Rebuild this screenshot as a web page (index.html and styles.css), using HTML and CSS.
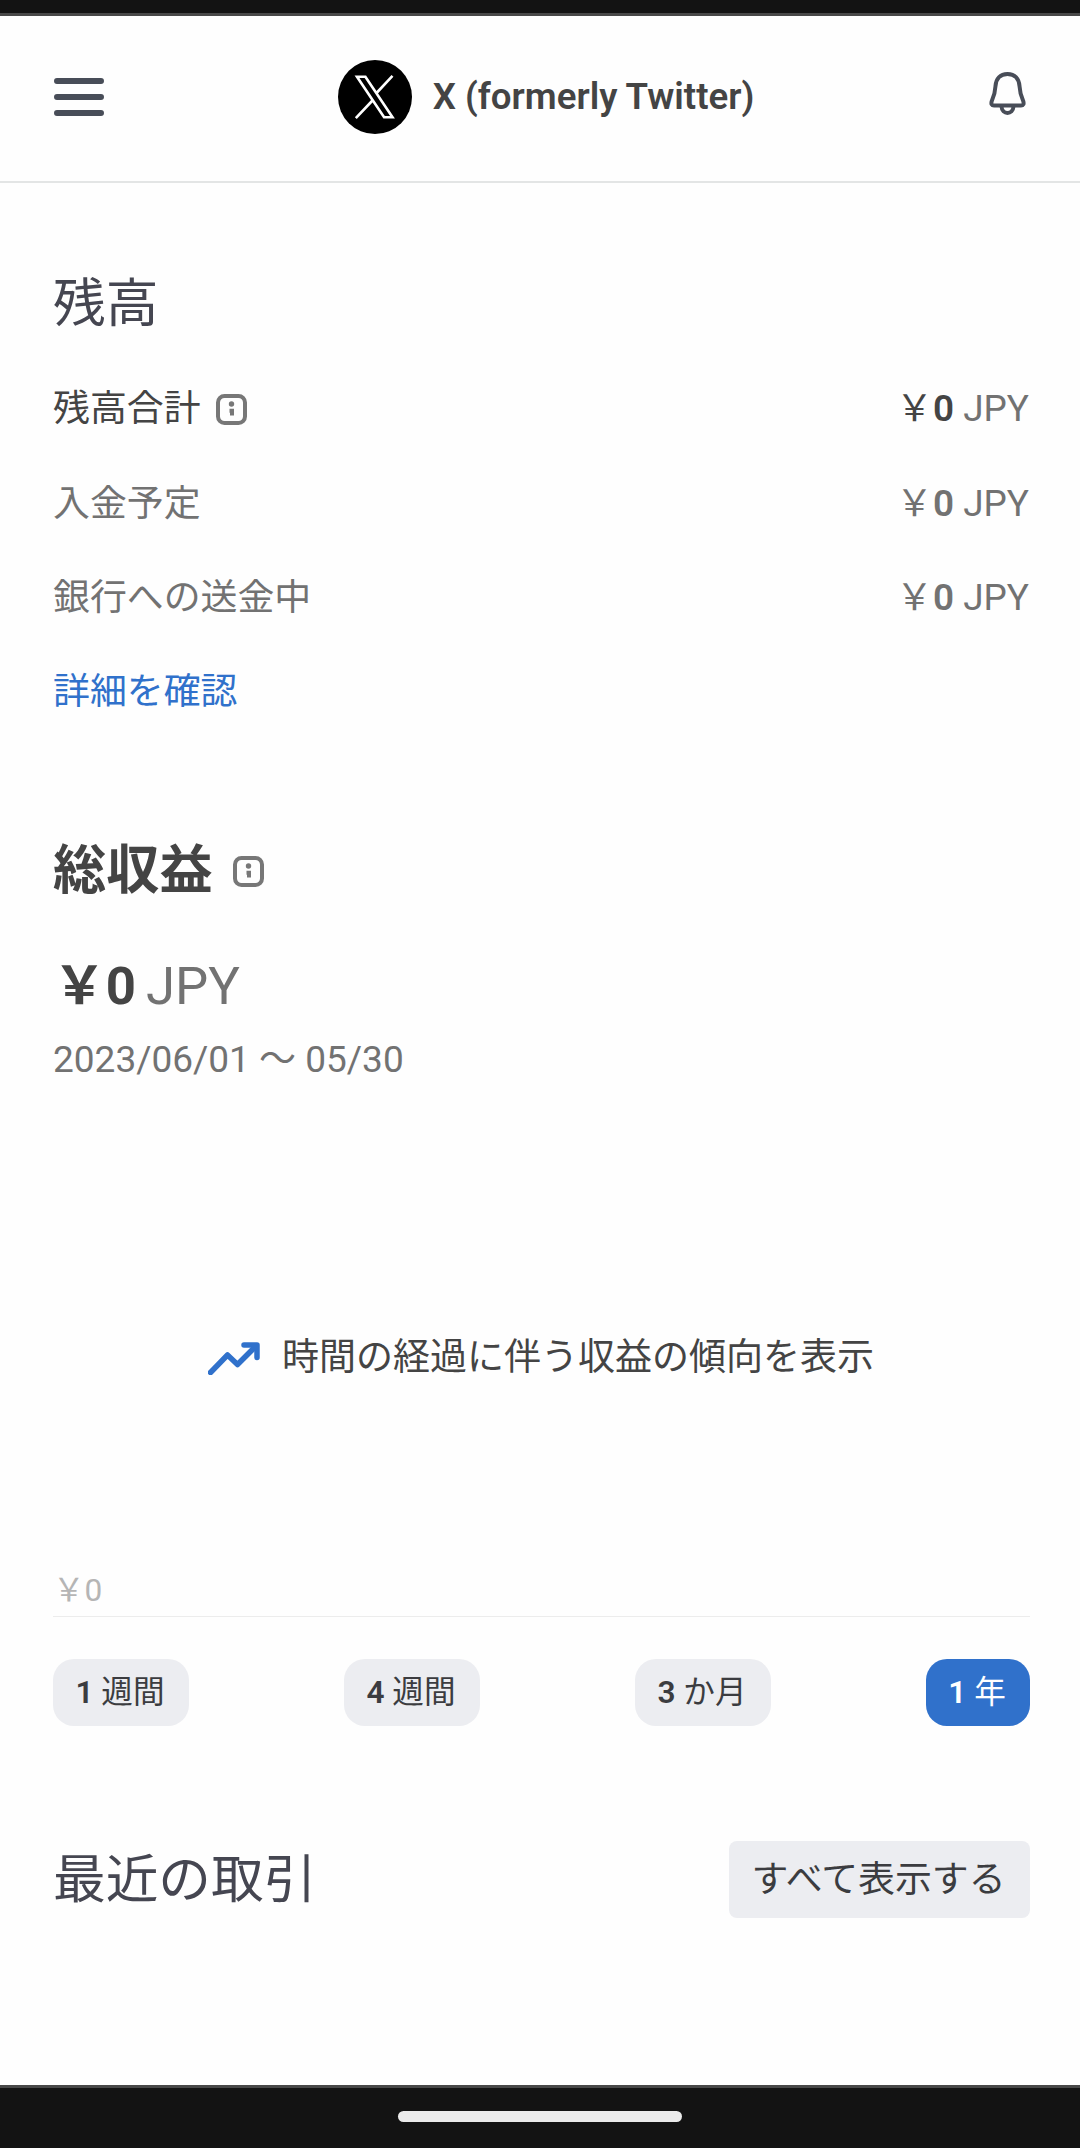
FILE: index.html
```html
<!DOCTYPE html>
<html lang="ja">
<head>
    <meta charset="UTF-8">
    <meta name="viewport" content="width=device-width, initial-scale=1.0">
    <title>X (formerly Twitter)</title>
    <link rel="stylesheet" href="styles.css">
</head>
<body>
    <div class="status-bar"></div>

    <header class="header">
        <button class="icon-button" aria-label="メニュー">
            <svg class="menu-icon" viewBox="0 0 50 38">
                <path d="M3 3H47M3 19H47M3 35H47" />
            </svg>
        </button>
        <div class="account">
            <svg class="account-logo" viewBox="0 0 74 74">
                <circle cx="37" cy="37" r="37" fill="#000" stroke="none" />
                <path d="M19 16.700H27.400L54.500 57.200H46.100ZM54.500 15.800L39 32.500M34 41L17.800 58.200" />
            </svg>
            <span class="account-name">X (formerly Twitter)</span>
        </div>
        <button class="icon-button" aria-label="通知">
            <svg class="bell-icon" viewBox="0 0 36 43">
                <path d="M18 2C10.500 2 6.500 7 6 14C5.700 21 4.500 24 2.300 29C1.300 32 2.200 33.500 4.500 33.500H31.500C33.800 33.500 34.700 32 33.700 29C31.500 24 30.300 21 30 14C29.500 7 25.500 2 18 2Z" />
                <path d="M12 34.500C12.500 43 23.500 43 24 34.500" />
            </svg>
        </button>
    </header>

    <main class="content">
        <!-- Balance -->
        <section class="balance">
            <h2>残高</h2>
            <div class="balance-row total">
                <span class="label">残高合計
                    <svg class="info-icon" viewBox="0 0 31 31">
                        <rect x="2" y="2" width="27" height="27" rx="6.500" />
                        <circle cx="15.500" cy="10" r="2.700" />
                        <path d="M13.500 16.800H16V21.500" />
                    </svg>
                </span>
                <span class="amount">￥<b>0</b> <span class="currency">JPY</span></span>
            </div>
            <div class="balance-row">
                <span class="label">入金予定</span>
                <span class="amount">￥<b>0</b> <span class="currency">JPY</span></span>
            </div>
            <div class="balance-row">
                <span class="label">銀行への送金中</span>
                <span class="amount">￥<b>0</b> <span class="currency">JPY</span></span>
            </div>
            <div class="balance-row">
                <a class="link" href="#">詳細を確認</a>
            </div>
        </section>

        <!-- Earnings -->
        <section class="earnings">
            <h2 class="bold">総収益
                <svg class="info-icon" viewBox="0 0 31 31">
                    <rect x="2" y="2" width="27" height="27" rx="6.500" />
                    <circle cx="15.500" cy="10" r="2.700" />
                    <path d="M13.500 16.800H16V21.500" />
                </svg>
            </h2>
            <div class="earnings-total">￥0 <span class="currency">JPY</span></div>
            <div class="earnings-dates">2023/06/01 ～ 05/30</div>

            <div class="chart">
                <div class="chart-message">
                    <svg class="trend-icon" viewBox="0 0 52 33">
                        <path d="M2.500 30.500L19.500 13L29.500 22.500L47 5" />
                        <path d="M36 3H49V15.500" />
                    </svg>
                    <span>時間の経過に伴う収益の傾向を表示</span>
                </div>
                <div class="chart-axis">￥0</div>
            </div>

            <div class="ranges">
                <button class="range"><b>1</b> 週間</button>
                <button class="range"><b>4</b> 週間</button>
                <button class="range"><b>3</b> か月</button>
                <button class="range active"><b>1</b> 年</button>
            </div>
        </section>

        <!-- Recent transactions -->
        <section class="transactions">
            <h2>最近の取引</h2>
            <button class="show-all">すべて表示する</button>
        </section>
    </main>

    <div class="nav-bar">
        <div class="nav-handle"></div>
    </div>
</body>
</html>
```
FILE: styles.css
```css
* {
    box-sizing: border-box;
}
body {
    margin: 0;
    height: 2148px;
    display: flex;
    flex-direction: column;
    overflow: hidden;
    background: #fefefe;
    color: #444;
    font-family: Roboto, "Noto Sans CJK JP", sans-serif;
    font-size: 36.9px;
    line-height: 1.4;
}
button {
    border: none;
    padding: 0;
    font: inherit;
    color: inherit;
    background: none;
    cursor: pointer;
}
svg {
    display: block;
    fill: none;
}
h2 {
    margin: 0;
    height: 78px;
    line-height: 78px;
    font-size: 52.7px;
    font-weight: 400;
    color: #454651;
}
.status-bar {
    height: 16px;
    background: #131313;
    border-bottom: 3px solid #484848;
}
.header {
    height: 167px;
    padding: 0 54px 3px 54px;
    display: flex;
    justify-content: space-between;
    align-items: center;
    border-bottom: 2px solid #e3e5e5;
}
.menu-icon {
    width: 50px;
    height: 38px;
    stroke: #484d58;
    stroke-width: 6;
    stroke-linecap: round;
}
.account {
    display: flex;
    align-items: center;
    gap: 21px;
    margin-right: 1px;
}
.account-logo {
    width: 74px;
    height: 74px;
    stroke: #fff;
    stroke-width: 2.6;
}
.account-name {
    font-size: 36.7px;
    font-weight: 600;
    white-space: nowrap;
}
.bell-icon {
    width: 37px;
    height: 43px;
    margin-bottom: 8px;
    stroke: #484d58;
    stroke-width: 4;
}
.content {
    flex: 1;
    padding: 82px 50px 0 53px;
}
.balance-row {
    height: 94.3px;
    display: flex;
    justify-content: space-between;
    align-items: center;
    color: #727272;
}
.balance h2 {
    margin-bottom: 19px;
}
.label, .bold {
    display: flex;
    align-items: center;
}
.total {
    color: #444;
}
.info-icon {
    width: 31px;
    height: 31px;
    margin-left: 15px;
    stroke: #777;
    stroke-width: 4;
}
.info-icon circle {
    fill: #777;
    stroke: none;
}
.amount {
    margin-right: 1px;
}
.amount b {
    font-weight: 600;
}
.currency {
    font-weight: 400;
    color: #727272;
}
.link {
    color: #3071cb;
    text-decoration: none;
}
.earnings {
    margin-top: 93px;
}
.bold {
    font-size: 53.2px;
    font-weight: 700;
    color: #444;
}
.bold .info-icon {
    margin-left: 20px;
}
.earnings-total {
    height: 78px;
    margin-top: 37px;
    line-height: 78px;
    font-size: 52.7px;
    font-weight: 700;
    word-spacing: -3px;
}
.earnings-dates {
    height: 54px;
    margin-top: 8px;
    line-height: 54px;
    font-size: 37px;
    color: #727272;
}
.chart {
    height: 530px;
    display: flex;
    flex-direction: column;
    justify-content: space-between;
    border-bottom: 1px solid #ececec;
}
.chart-message {
    margin-top: 245px;
    padding-left: 155px;
    display: flex;
    align-items: center;
    gap: 22px;
    font-size: 37px;
}
.trend-icon {
    width: 52px;
    height: 33px;
    stroke: #3071cb;
    stroke-width: 5.5;
    stroke-linecap: round;
    stroke-linejoin: round;
}
.chart-axis {
    height: 50px;
    line-height: 50px;
    font-size: 31.6px;
    color: #b5b5b5;
}
.ranges {
    margin-top: 42px;
    display: flex;
    justify-content: space-between;
}
.range {
    width: 136px;
    height: 67px;
    padding-right: 2px;
    border-radius: 21px;
    background: #ecedf1;
    color: #3b3c40;
    font-size: 31.6px;
}
.range b {
    font-weight: 600;
}
.range.active {
    width: 104px;
    background: #3071cb;
    color: #fff;
}
.transactions {
    margin-top: 115px;
    display: flex;
    justify-content: space-between;
}
.show-all {
    width: 301px;
    height: 77px;
    padding-right: 2px;
    border-radius: 8px;
    background: #ecedf1;
    color: #3b3c40;
}
.nav-bar {
    height: 63px;
    display: flex;
    justify-content: center;
    padding-top: 23px;
    background: #131313;
    border-top: 3px solid #484848;
}
.nav-handle {
    width: 284px;
    height: 11px;
    border-radius: 6px;
    background: #ebebeb;
}
```
